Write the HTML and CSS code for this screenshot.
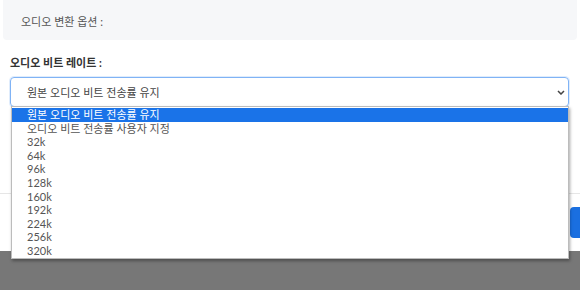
FILE: index.html
```html
<!DOCTYPE html>
<html lang="ko">
<head>
<meta charset="utf-8">
<link rel="stylesheet" href="styles.css">
</head>
<body>
<div class="page">
  <div class="options-head">오디오 변환 옵션 :</div>
  <div class="field">
    <div class="field-label">오디오 비트 레이트 :</div>
    <div class="select">
      <span class="select-value">원본 오디오 비트 전송률 유지</span>
      <svg class="chev" width="8" height="5" viewBox="0 0 8 5"><path d="M1 1 L4 4 L7 1" fill="none" stroke="#444" stroke-width="1.5"/></svg>
    </div>
  </div>
  <div class="spacer"></div>
  <div class="footer-row">
    <div class="btn"></div>
  </div>
  <div class="overlay"></div>
  <ul class="dropdown">
    <li class="sel">원본 오디오 비트 전송률 유지</li>
    <li>오디오 비트 전송률 사용자 지정</li>
    <li>32k</li>
    <li>64k</li>
    <li>96k</li>
    <li>128k</li>
    <li>160k</li>
    <li>192k</li>
    <li>224k</li>
    <li>256k</li>
    <li>320k</li>
  </ul>
</div>
</body>
</html>
```
FILE: styles.css
```css
* { box-sizing: border-box; }
html, body { margin: 0; padding: 0; }
body {
  width: 580px;
  height: 290px;
  overflow: hidden;
  background: #fff;
  font-family: Lato, "Noto Sans CJK KR", sans-serif;
  font-size: 11px;
  color: #444;
}
.page {
  position: relative;
  height: 290px;
  display: flex;
  flex-direction: column;
}
.options-head {
  margin: 0 3px;
  height: 40px;
  background: #f6f7f9;
  border-radius: 0 0 4px 4px;
  padding: 13px 0 0 18px;
  color: #555;
  font-size: 11px;
}
.field {
  padding: 14px 11px 0 10px;
}
.field-label {
  font-weight: bold;
  color: #333;
  font-size: 11px;
  height: 23px;
}
.select {
  height: 30px;
  border: 1px solid #80b3f5;
  border-radius: 4px;
  display: flex;
  align-items: center;
  justify-content: space-between;
  padding: 0 3px 0 16px;
  box-shadow: 0 0 0 1px rgba(128,179,245,0.25);
}
.select-value { color: #444; }
.chev { margin-top: 1px; }
.spacer {
  height: 87px;
  border-bottom: 1px solid #e6e6e6;
}
.footer-row {
  display: flex;
  justify-content: flex-end;
  padding-top: 13px;
  height: 57px;
}
.btn {
  width: 10px;
  height: 31px;
  background: #1a6fe0;
  border-radius: 4px 0 0 4px;
}
.overlay {
  flex: 1;
  background: #777;
}
.dropdown {
  position: absolute;
  left: 11px;
  top: 106px;
  width: 558px;
  margin: 0;
  padding: 1px 0 0;
  list-style: none;
  background: #fff;
  border: 1px solid #bcbcbc;
  box-shadow: 1px 2px 3px rgba(0,0,0,0.35);
}
.dropdown li {
  height: 13.6px;
  line-height: 13.6px;
  padding-left: 15px;
  color: #555;
  font-size: 11px;
}
.dropdown li.sel {
  background: #1a73e8;
  color: #fff;
}
```
